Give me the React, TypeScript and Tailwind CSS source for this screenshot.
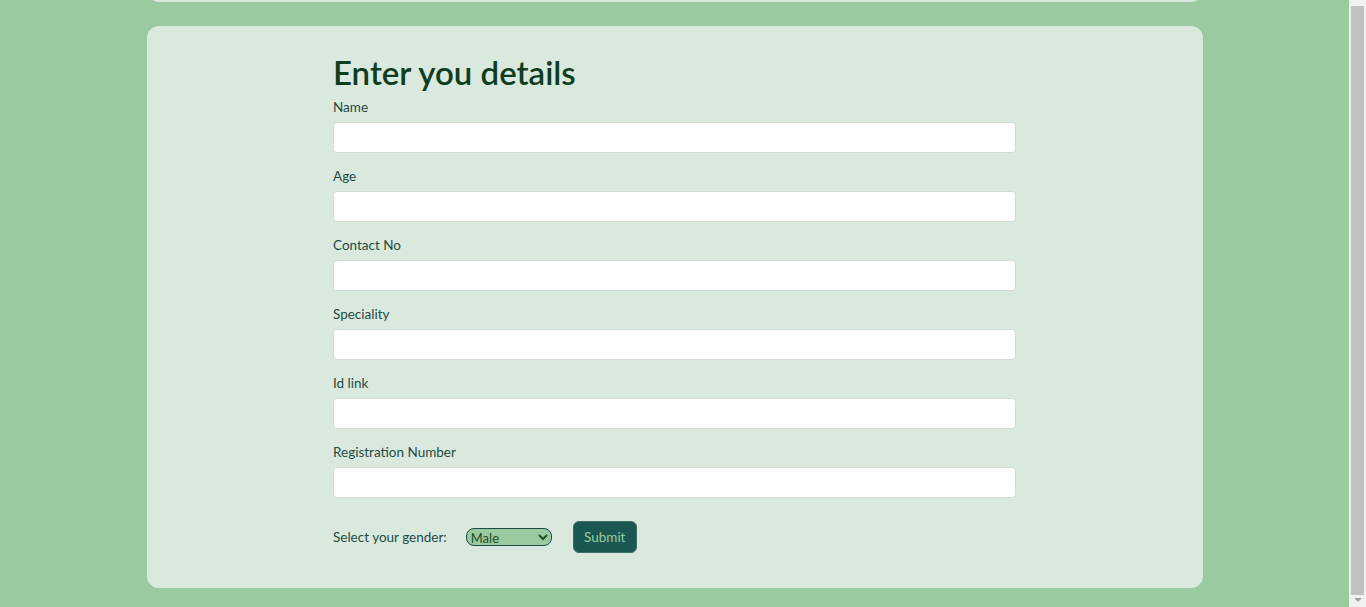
import React from "react";

const fields = ["Name", "Age", "Contact No", "Speciality", "Id link", "Registration Number"];

export default function App() {
  return (
    <div className="flex h-[607px] w-[1366px] overflow-hidden bg-[#9aca9f]" style={{ fontFamily: "Lato, 'Open Sans', sans-serif" }}>
      <div className="flex w-[1349px] flex-col px-[147px] pr-[146px]">
        <div className="mt-[-12px] h-[14px] rounded-b-[12px] bg-[#dae9dd]" />
        <div className="mt-[24px] flex h-[562px] flex-col rounded-[12px] bg-[#dae9dd] pl-[186px] pt-[30px]">
          <h1 className="text-[33px] leading-[33px] font-semibold text-[#0f3d1f]">Enter you details</h1>
          <div className="mt-[8px] flex w-[683px] flex-col">
            {fields.map((f, i) => (
              <div key={f} className={"flex flex-col " + (i > 0 ? "mt-[13px]" : "")}>
                <label className="h-[20px] text-[13.5px] leading-[20px] text-[#1f4a44]">{f}</label>
                <input className="mt-[5px] h-[31px] rounded-[4px] border border-[#d3dbd5] bg-white px-2 outline-none" />
              </div>
            ))}
          </div>
          <div className="mt-[23px] flex h-[32px] items-center">
            <span className="text-[13.5px] text-[#1f4a44]">Select your gender:</span>
            <select className="ml-[19px] h-[18px] w-[86px] rounded-[8px] border border-[#1f4a44] bg-[#9aca9f] pl-0 text-[13px] leading-[16px] text-[#254d2a]" defaultValue="Male">
              <option>Male</option>
              <option>Female</option>
            </select>
            <button className="ml-[21px] h-[32px] w-[64px] rounded-[6px] border border-[#3e6e66] bg-[#1a5751] text-[13.5px] text-[#9aca9f]">Submit</button>
          </div>
        </div>
      </div>
      <div className="flex w-[17px] flex-col items-center bg-[#f1f1f1]">
        <div className="mt-[6px] h-[589px] w-[13px] bg-[#c1c1c1]" />
        <div className="mt-[3px] h-0 w-0 border-x-[4px] border-t-[4px] border-x-transparent border-t-[#a3a3a3]" />
      </div>
    </div>
  );
}
